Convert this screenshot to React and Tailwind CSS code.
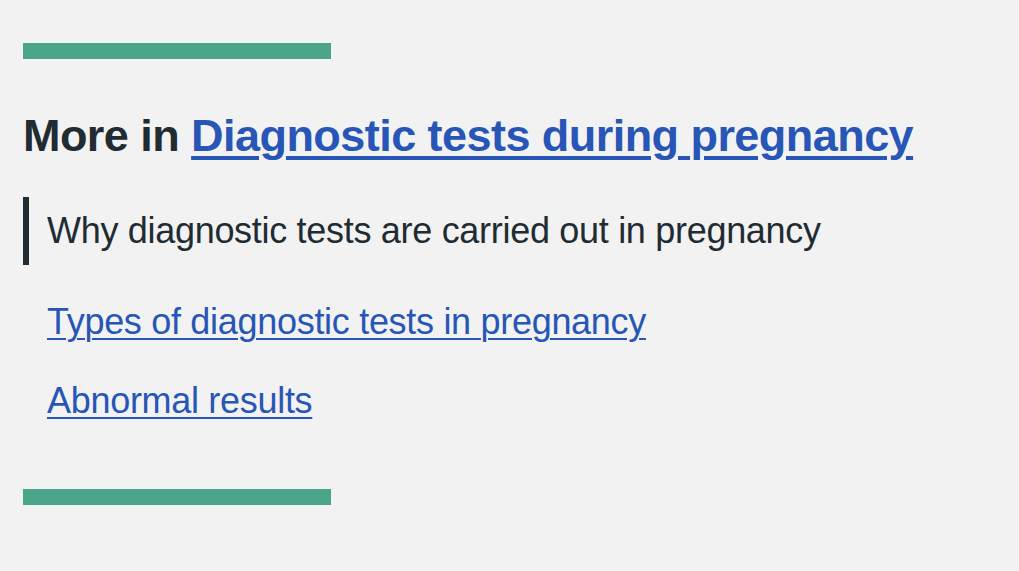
import React from 'react';

const links = [
  { label: 'Types of diagnostic tests in pregnancy', href: '#types' },
  { label: 'Abnormal results', href: '#abnormal' },
];

export default function App() {
  return (
    <div
      className="min-h-screen w-full bg-[#f2f2f2] px-[23px] pt-[43px] text-[#212b32]"
      style={{ fontFamily: '"Liberation Sans", Arial, sans-serif' }}
    >
      <div className="h-4 w-[308px] bg-[#4aa58a]"></div>

      <h2 className="mt-[54px] text-[45px] font-bold leading-none tracking-[-0.55px]">
        More in{' '}
        <a
          href="#diagnostic-tests"
          className="text-[#2756b6] underline decoration-[4px] underline-offset-[5px]"
        >
          Diagnostic tests during pregnancy
        </a>
      </h2>

      <nav className="mt-[39px]">
        <ul className="flex flex-col">
          <li className="border-l-[6px] border-[#212b32] py-4 pl-[18px] text-[36px] leading-none tracking-[-0.3px]">
            Why diagnostic tests are carried out in pregnancy
          </li>
          {links.map((link, i) => (
            <li
              key={link.href}
              className={
                'pl-[24px] text-[36px] leading-none tracking-[-0.3px] ' +
                (i === 0 ? 'mt-[39px]' : 'mt-[43px]')
              }
            >
              <a
                href={link.href}
                className="text-[#2756b6] underline decoration-[2px] underline-offset-[4px]"
              >
                {link.label}
              </a>
            </li>
          ))}
        </ul>
      </nav>

      <div className="mt-[70px] h-4 w-[308px] bg-[#4aa58a]"></div>
    </div>
  );
}
